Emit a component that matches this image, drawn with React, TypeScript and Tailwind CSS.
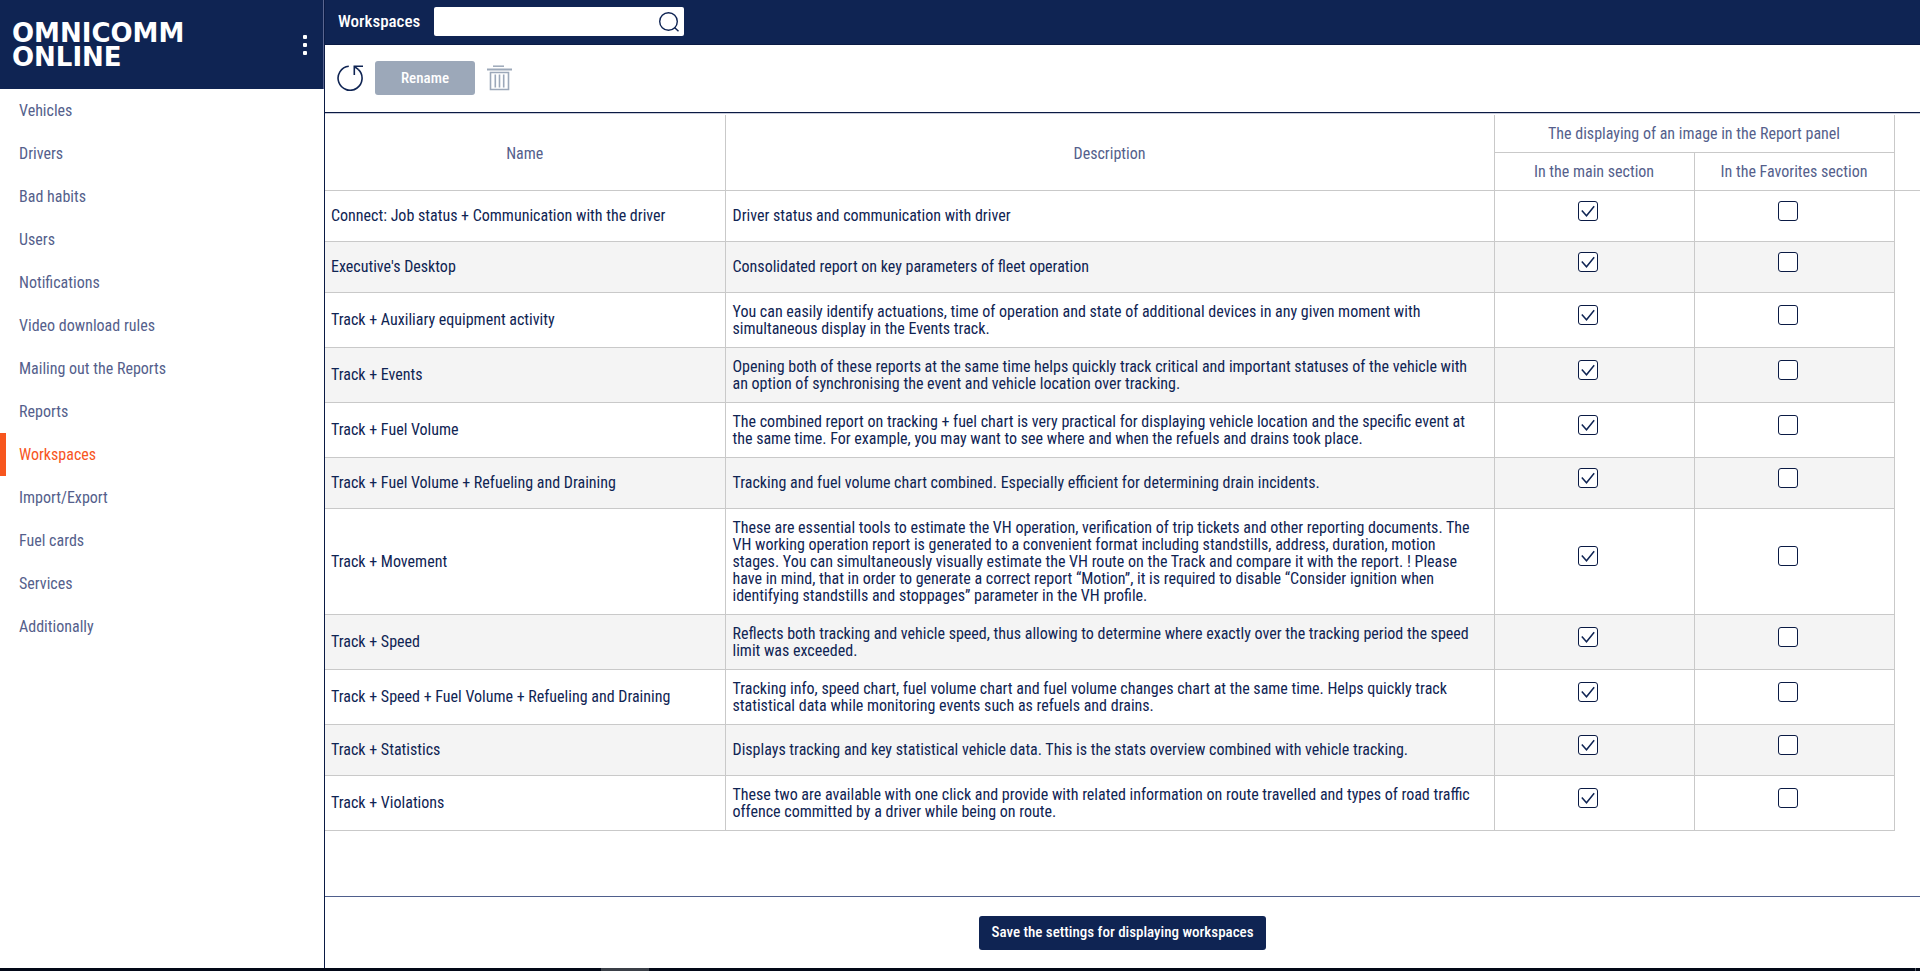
import { useState } from "react";

const menu = [
  "Vehicles",
  "Drivers",
  "Bad habits",
  "Users",
  "Notifications",
  "Video download rules",
  "Mailing out the Reports",
  "Reports",
  "Workspaces",
  "Import/Export",
  "Fuel cards",
  "Services",
  "Additionally",
];

type Workspace = { name: string; description: string };

const workspaces: Workspace[] = [
  {
    name: "Connect: Job status + Communication with the driver",
    description: "Driver status and communication with driver",
  },
  {
    name: "Executive's Desktop",
    description: "Consolidated report on key parameters of fleet operation",
  },
  {
    name: "Track + Auxiliary equipment activity",
    description:
      "You can easily identify actuations, time of operation and state of additional devices in any given moment with simultaneous display in the Events track.",
  },
  {
    name: "Track + Events",
    description:
      "Opening both of these reports at the same time helps quickly track critical and important statuses of the vehicle with an option of synchronising the event and vehicle location over tracking.",
  },
  {
    name: "Track + Fuel Volume",
    description:
      "The combined report on tracking + fuel chart is very practical for displaying vehicle location and the specific event at the same time. For example, you may want to see where and when the refuels and drains took place.",
  },
  {
    name: "Track + Fuel Volume + Refueling and Draining",
    description:
      "Tracking and fuel volume chart combined. Especially efficient for determining drain incidents.",
  },
  {
    name: "Track + Movement",
    description:
      "These are essential tools to estimate the VH operation, verification of trip tickets and other reporting documents. The VH working operation report is generated to a convenient format including standstills, address, duration, motion stages. You can simultaneously visually estimate the VH route on the Track and compare it with the report. ! Please have in mind, that in order to generate a correct report “Motion”, it is required to disable “Consider ignition when identifying standstills and stoppages” parameter in the VH profile.",
  },
  {
    name: "Track + Speed",
    description:
      "Reflects both tracking and vehicle speed, thus allowing to determine where exactly over the tracking period the speed limit was exceeded.",
  },
  {
    name: "Track + Speed + Fuel Volume + Refueling and Draining",
    description:
      "Tracking info, speed chart, fuel volume chart and fuel volume changes chart at the same time. Helps quickly track statistical data while monitoring events such as refuels and drains.",
  },
  {
    name: "Track + Statistics",
    description:
      "Displays tracking and key statistical vehicle data. This is the stats overview combined with vehicle tracking.",
  },
  {
    name: "Track + Violations",
    description:
      "These two are available with one click and provide with related information on route travelled and types of road traffic offence committed by a driver while being on route.",
  },
];

function Checkbox({ label, defaultChecked }: { label: string; defaultChecked?: boolean }) {
  const [checked, setChecked] = useState(!!defaultChecked);

  return (
    <label className="grid justify-start w-8 mx-auto pb-2.5 cursor-pointer">
      <input
        type="checkbox"
        aria-label={label}
        checked={checked}
        onChange={(e) => setChecked(e.target.checked)}
        className="appearance-none col-start-1 row-start-1 size-5 rounded-[3px] border border-[#0a1a44] bg-white"
      />
      {checked && (
        <svg viewBox="0 0 20 20" className="col-start-1 row-start-1 size-5 pointer-events-none">
          <path d="M3.8 9.5 8.5 14.8 16.2 5.3" fill="none" stroke="#0f2453" strokeWidth="1.5" />
        </svg>
      )}
    </label>
  );
}

function Sidebar() {
  return (
    <aside className="w-[325px] shrink-0 border-r border-[#0a1a44] bg-white">
      <div className="h-[89px] flex items-center justify-between pl-3 pr-4 bg-[#0f2453] border-r border-[#5a6690] text-white">
        <div className="font-['DejaVu_Sans'] font-bold text-[26px] leading-6">
          OMNICOMM
          <br />
          ONLINE
        </div>
        <button aria-label="Menu" className="flex flex-col gap-1 cursor-pointer">
          <span className="size-1 bg-white rounded-[1px]" />
          <span className="size-1 bg-white rounded-[1px]" />
          <span className="size-1 bg-white rounded-[1px]" />
        </button>
      </div>
      <nav>
        {menu.map((item) => (
          <a
            key={item}
            href="#"
            className={
              item === "Workspaces"
                ? "flex items-center h-[43px] pl-[13px] border-l-6 border-[#f7561e] text-[#f7561e]"
                : "flex items-center h-[43px] pl-[13px] border-l-6 border-transparent text-[#555f8c]"
            }
          >
            {item}
          </a>
        ))}
      </nav>
    </aside>
  );
}

function Toolbar() {
  return (
    <div className="h-[68px] shrink-0 flex items-center gap-3 pl-3 pb-px border-b border-[#0a1a44]">
      <button aria-label="Refresh" className="cursor-pointer">
        <svg viewBox="0 0 26 26" className="size-[26px]" fill="none" stroke="#0f2453" strokeWidth="1.6">
          <path d="M11.8 1.3A12 12 0 1 0 21.2 4.4" />
          <path d="M26 1.3H17.3V10M17.3 1.3 21.2 4.4" />
        </svg>
      </button>
      <button className="h-[34px] w-[100px] rounded-[3px] bg-[#9ca8b9] text-white text-[15px] font-medium cursor-pointer">
        Rename
      </button>
      <button aria-label="Delete" className="cursor-pointer">
        <svg viewBox="0 0 26 26" className="size-[26px]" fill="none" stroke="#9ca8b9">
          <path d="M6 1.2H17" strokeWidth="1.5" />
          <path d="M0 4.5H25" strokeWidth="2" />
          <path d="M3.5 7.5H21.5V24.5H3.5Z" strokeWidth="1.6" />
          <path d="M8.3 9.5V22.5M12.5 9.5V22.5M16.7 9.5V22.5" strokeWidth="1.6" />
        </svg>
      </button>
    </div>
  );
}

function WorkspaceTable() {
  return (
    <table className="w-full mt-px border-collapse text-[#0f2453]">
      <colgroup>
        <col className="w-[400px]" />
        <col />
        <col className="w-[200px]" />
        <col className="w-[200px]" />
        <col className="w-[26px]" />
      </colgroup>
      <thead className="text-[#555f8c]">
        <tr className="h-[37px]">
          <th rowSpan={2} className="pt-0.5 font-normal border-r border-b border-[#c9c9c9]">
            Name
          </th>
          <th rowSpan={2} className="pt-0.5 font-normal border-r border-b border-[#c9c9c9]">
            Description
          </th>
          <th colSpan={2} className="font-normal border-r border-b border-[#c9c9c9]">
            The displaying of an image in the Report panel
          </th>
          <td rowSpan={2} className="border-b border-[#c9c9c9]" />
        </tr>
        <tr className="h-[38px]">
          <th className="font-normal border-r border-b border-[#c9c9c9]">In the main section</th>
          <th className="font-normal border-r border-b border-[#c9c9c9]">In the Favorites section</th>
        </tr>
      </thead>
      <tbody>
        {workspaces.map((w, i) => (
          <tr key={w.name}>
            <td className={`pl-1.5 pr-3 py-2.5 border-r border-b border-[#c9c9c9] ${i % 2 ? "bg-[#f4f4f4]" : "bg-white"}`}>
              {w.name}
            </td>
            <td className={`pl-[7px] pr-3 py-2.5 border-r border-b border-[#c9c9c9] ${i % 2 ? "bg-[#f4f4f4]" : "bg-white"}`}>
              {w.description}
            </td>
            <td className={`py-2.5 border-r border-b border-[#c9c9c9] ${i % 2 ? "bg-[#f4f4f4]" : "bg-white"}`}>
              <Checkbox label={`${w.name}: main section`} defaultChecked />
            </td>
            <td className={`py-2.5 border-r border-b border-[#c9c9c9] ${i % 2 ? "bg-[#f4f4f4]" : "bg-white"}`}>
              <Checkbox label={`${w.name}: Favorites section`} />
            </td>
            <td />
          </tr>
        ))}
      </tbody>
    </table>
  );
}

export default function App() {
  return (
    <div className="min-h-screen flex flex-col bg-white font-['Roboto_Condensed','Roboto',sans-serif] text-[16px] leading-[17px]">
      <div className="flex-1 flex">
        <Sidebar />
        <main className="flex-1 min-w-0 flex flex-col">
          <header className="h-[45px] shrink-0 flex items-center gap-3.5 pl-[13px] pb-px bg-[#0f2453] border-b border-[#0a1a44] text-white">
            <h1 className="text-[17px] font-medium">Workspaces</h1>
            <div className="flex items-center w-[250px] h-[29px] pr-[5px] rounded-[2px] bg-white">
              <input type="text" aria-label="Search workspaces" className="flex-1 min-w-0 px-2 text-[#0f2453] outline-none" />
              <button aria-label="Search" className="cursor-pointer">
                <svg viewBox="0 0 20 20" className="size-5" fill="none" stroke="#0f2453" strokeWidth="1.4">
                  <circle cx="9.5" cy="9.5" r="8.8" />
                  <path d="M15.5 15.5 19.5 19.3" />
                </svg>
              </button>
            </div>
          </header>
          <Toolbar />
          <div className="flex-1 border-t border-[#c8cbd8]">
            <WorkspaceTable />
          </div>
          <footer className="h-[72px] shrink-0 flex items-center justify-center border-t border-[#4f5f8c]">
            <button className="h-[34px] px-3 rounded-[3px] bg-[#0f2453] text-white text-[15px] font-medium cursor-pointer">
              Save the settings for displaying workspaces
            </button>
          </footer>
        </main>
      </div>
      <div className="h-[3px] shrink-0 bg-[#020817] flex">
        <div className="ml-[601px] w-12 bg-[#3a3f47]" />
        <div className="ml-auto mr-1 w-px bg-[#5a6068]" />
      </div>
    </div>
  );
}
